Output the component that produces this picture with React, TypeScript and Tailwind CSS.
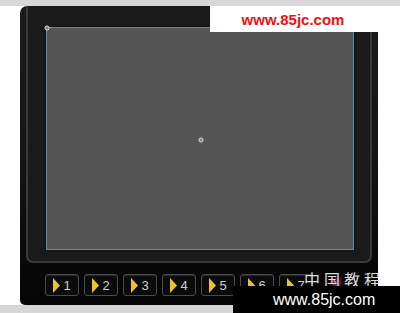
const buttons = [1, 2, 3, 4, 5, 6, 7];

function RegMark({ className }: { className: string }) {
  return (
    <svg className={className} width="6" height="6" viewBox="0 0 6 6">
      <circle cx="3" cy="3" r="2" fill="#444" stroke="#e8e8e8" strokeWidth="1" />
      <path d="M3 0.5v5M0.5 3h5" stroke="#bbb" strokeWidth="0.6" />
    </svg>
  );
}

function PlayButton({ n }: { n: number }) {
  return (
    <div className="w-[34px] h-[22px] shrink-0 rounded-[3px] border border-[#4a4a4a] bg-[#0b0b0b] flex items-center justify-center gap-[3px] shadow-[inset_0_1px_0_#2a2a2a]">
      <svg width="7" height="15" viewBox="0 0 7 15">
        <path d="M0 0L7 7.5L0 15Z" fill="#e9c232" />
      </svg>
      <span className="text-[13px] leading-none text-[#d0d0d0] font-['Liberation_Sans',sans-serif]">{n}</span>
    </div>
  );
}

export default function App() {
  return (
    <div className="relative w-[400px] h-[313px] bg-white overflow-hidden flex flex-col">
      <div className="h-[6px] bg-[#d7d7d7]" />
      <div className="h-[299px] flex">
        <div className="w-[20px]" />
        <div className="w-[358px] rounded-tl-[7px] rounded-tr-[3px] rounded-b-[5px] bg-gradient-to-b from-[#1b1b1b] via-[#151515] to-[#050505] flex flex-col px-[6px]">
          <div className="h-[257px] border-x-2 border-b-2 border-[#3a3a3a] rounded-b-[7px] bg-[#1a1a1a] pl-[18px] pr-[16px] pt-[21px]">
            <div className="relative h-[223px] bg-[#555555] border border-[#5a8cab] shadow-[0_0_2px_#000]">
              <RegMark className="absolute -left-[3px] -top-[3px]" />
              <RegMark className="absolute left-[151px] top-[109px]" />
            </div>
          </div>
          <div className="flex gap-[5px] pl-[19px] pt-[11px]">
            {buttons.map((n) => (
              <PlayButton key={n} n={n} />
            ))}
          </div>
        </div>
      </div>
      <div className="h-[8px] bg-[#d7d7d7]" />

      <div className="absolute left-[210px] top-[6px] w-[170px] h-[26px] bg-white flex items-center justify-center">
        <span className="text-[15px] font-bold text-[#ee1111] leading-none font-['Liberation_Sans',sans-serif] pr-[4px]">www.85jc.com</span>
      </div>

      <div className="absolute left-[304px] top-[271px] flex items-center">
        <div className="absolute left-[24px] top-[4px] w-[16px] h-[16px] rounded-full bg-[radial-gradient(circle,#c84a7a_0%,transparent_70%)] opacity-70" />
        <span className="relative text-[16px] tracking-[4px] text-[#dcdcdc] leading-none font-['Noto_Sans_CJK_SC',sans-serif]">中国教程</span>
      </div>

      <div className="absolute left-[233px] top-[286px] w-[167px] h-[27px] bg-black flex items-center pl-[40px]">
        <span className="text-[16px] text-white leading-none font-['Liberation_Sans',sans-serif]">www.85jc.com</span>
      </div>
    </div>
  );
}
